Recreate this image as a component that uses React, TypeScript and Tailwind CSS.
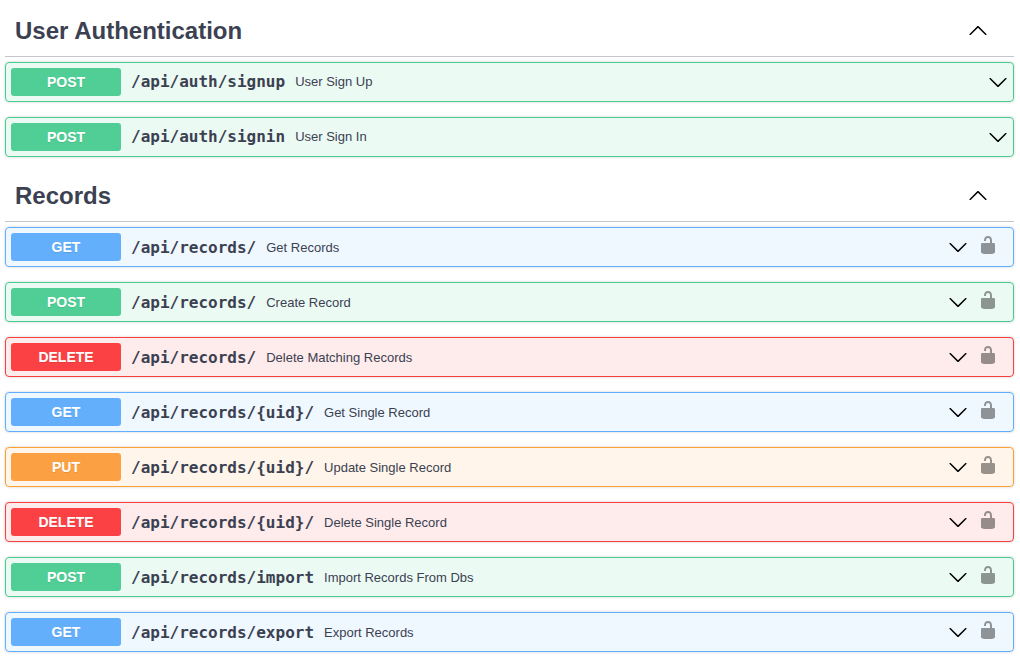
import { useState } from "react";

type Method = "GET" | "POST" | "PUT" | "DELETE";

interface Operation {
  method: Method;
  path: string;
  summary: string;
  secured?: boolean;
}

interface TagGroup {
  name: string;
  operations: Operation[];
}

const groups: TagGroup[] = [
  {
    name: "User Authentication",
    operations: [
      { method: "POST", path: "/api/auth/signup", summary: "User Sign Up" },
      { method: "POST", path: "/api/auth/signin", summary: "User Sign In" },
    ],
  },
  {
    name: "Records",
    operations: [
      { method: "GET", path: "/api/records/", summary: "Get Records", secured: true },
      { method: "POST", path: "/api/records/", summary: "Create Record", secured: true },
      { method: "DELETE", path: "/api/records/", summary: "Delete Matching Records", secured: true },
      { method: "GET", path: "/api/records/{uid}/", summary: "Get Single Record", secured: true },
      { method: "PUT", path: "/api/records/{uid}/", summary: "Update Single Record", secured: true },
      { method: "DELETE", path: "/api/records/{uid}/", summary: "Delete Single Record", secured: true },
      { method: "POST", path: "/api/records/import", summary: "Import Records From Dbs", secured: true },
      { method: "GET", path: "/api/records/export", summary: "Export Records", secured: true },
    ],
  },
];

const blockStyles: Record<Method, string> = {
  GET: "border-[#61affe] bg-[#61affe]/10",
  POST: "border-[#49cc90] bg-[#49cc90]/10",
  PUT: "border-[#fca130] bg-[#fca130]/10",
  DELETE: "border-[#f93e3e] bg-[#f93e3e]/10",
};

const badgeStyles: Record<Method, string> = {
  GET: "bg-[#63affb]",
  POST: "bg-[#50ce95]",
  PUT: "bg-[#fca143]",
  DELETE: "bg-[#fb4143]",
};

function ArrowUp() {
  return (
    <svg className="mb-0.5 size-5 shrink-0" viewBox="0 0 20 20" fill="black" aria-hidden="true">
      <path d="M17.418 14.908c.272.268.709.268.979 0s.271-.701 0-.969l-7.908-7.83c-.27-.268-.707-.268-.979 0l-7.908 7.83c-.27.268-.27.701 0 .969.271.268.709.268.979 0L10 7.767l7.418 7.141z" />
    </svg>
  );
}

function ArrowDown() {
  return (
    <svg className="size-5 shrink-0" viewBox="0 0 20 20" fill="black" aria-hidden="true">
      <path d="M17.418 6.109c.272-.268.709-.268.979 0s.271.701 0 .969l-7.908 7.83c-.27.268-.707.268-.979 0l-7.908-7.83c-.27-.268-.271-.701 0-.969.271-.268.709-.268.979 0L10 13.25l7.418-7.141z" />
    </svg>
  );
}

function Unlocked() {
  return (
    <svg className="size-5" viewBox="0 0 20 20" fill="black" aria-hidden="true">
      <path d="M15.8 8H14V5.6C14 2.703 12.665 1 10 1 7.334 1 6 2.703 6 5.6V6h2v-.801C8 3.754 8.797 3 10 3c1.203 0 2 .754 2 2.199V8H4c-.553 0-1 .646-1 1.199V17c0 .549.428 1.139.951 1.307l1.197.387C5.672 18.861 6.55 19 7.1 19h5.8c.549 0 1.428-.139 1.951-.307l1.196-.387c.524-.167.953-.757.953-1.306V9.199C17 8.646 16.352 8 15.8 8z" />
    </svg>
  );
}

function OperationRow({ method, path, summary, secured }: Operation) {
  return (
    <div
      className={`flex items-center rounded border p-[5px] shadow-[0_0_3px_rgba(0,0,0,0.19)] ${blockStyles[method]}`}
    >
      <button type="button" className="flex min-w-0 flex-1 cursor-pointer items-center gap-2.5 text-left">
        <span
          className={`w-[110px] shrink-0 rounded-[3px] text-center text-sm leading-7 font-bold text-white [text-shadow:0_1px_0_rgba(0,0,0,0.1)] ${badgeStyles[method]}`}
        >
          {method}
        </span>
        <span className={`flex min-w-0 flex-1 items-center gap-2.5 leading-5 ${secured ? "pt-0.5" : ""}`}>
          <span className="font-['DejaVu_Sans_Mono',monospace] text-base leading-5 font-semibold">{path}</span>
          <span className="min-w-0 flex-1 text-[13px] leading-5">{summary}</span>
        </span>
        <ArrowDown />
      </button>
      {secured && (
        <button
          type="button"
          aria-label="Authorization button unlocked"
          className="shrink-0 cursor-pointer px-2.5 pb-1 opacity-40"
        >
          <Unlocked />
        </button>
      )}
    </div>
  );
}

function TagSection({ name, operations }: TagGroup) {
  const [open, setOpen] = useState(true);
  return (
    <section>
      <h3 className="mb-[5px] border-b border-[#3b4151]/30">
        <button
          type="button"
          aria-expanded={open}
          onClick={() => setOpen(!open)}
          className="flex w-full cursor-pointer items-center justify-between pt-2 pr-[26px] pb-[9px] pl-2.5 text-left text-2xl font-bold"
        >
          {name}
          {open ? <ArrowUp /> : <ArrowDown />}
        </button>
      </h3>
      {open && (
        <div className="flex flex-col gap-[15px]">
          {operations.map((operation) => (
            <OperationRow key={operation.method + operation.path} {...operation} />
          ))}
        </div>
      )}
    </section>
  );
}

export default function App() {
  return (
    <main className="flex min-h-screen flex-col gap-[15px] bg-white pt-[7px] pr-1.5 pb-5 pl-[5px] font-['Liberation_Sans',Arial,sans-serif] text-[#3b4151]">
      {groups.map((group) => (
        <TagSection key={group.name} {...group} />
      ))}
    </main>
  );
}
